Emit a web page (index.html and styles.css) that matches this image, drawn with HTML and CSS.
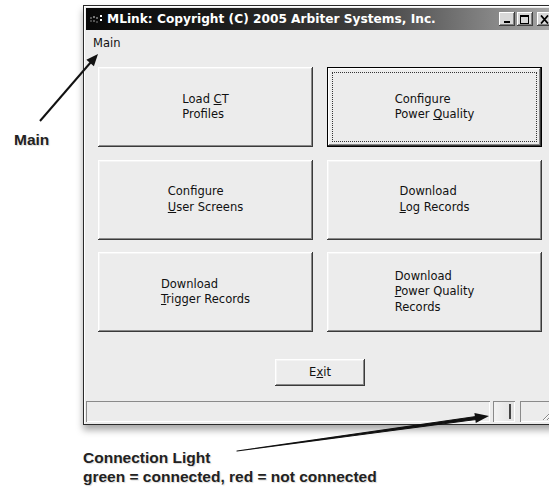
FILE: index.html
```html
<!DOCTYPE html>
<html>
<head>
<meta charset="utf-8">
<link rel="stylesheet" href="styles.css">
</head>
<body>
<div class="page">
  <div class="side"><span class="callout">Main</span></div>
  <div class="main">
    <div class="window">
      <div class="titlebar">
        <svg class="appicon" width="14" height="10" viewBox="0 0 14 10"><rect x="0" y="3" width="2" height="2" fill="#555"/><rect x="3" y="2" width="2" height="2" fill="#777"/><rect x="6" y="3" width="2" height="2" fill="#666"/><rect x="10" y="1" width="2" height="2" fill="#fff"/><rect x="10" y="5" width="2" height="2" fill="#fff"/><rect x="0" y="6" width="2" height="2" fill="#444"/><rect x="3" y="6" width="2" height="2" fill="#555"/><rect x="6" y="7" width="2" height="2" fill="#444"/></svg>
        <span class="title">MLink: Copyright (C) 2005 Arbiter Systems, Inc.</span>
        <div class="controls">
          <span class="ctl"><svg width="10" height="9" viewBox="0 0 10 9"><rect x="2" y="6" width="6" height="2" fill="#000"/></svg></span>
          <span class="ctl"><svg width="10" height="9" viewBox="0 0 10 9"><rect x="0.5" y="0.5" width="8" height="8" fill="none" stroke="#000"/><rect x="0" y="0" width="9" height="2" fill="#000"/></svg></span>
          <span class="ctl close"><svg width="10" height="9" viewBox="0 0 10 9"><path d="M1 0.5 L8 8.5 M8 0.5 L1 8.5" stroke="#000" stroke-width="1.8"/></svg></span>
        </div>
      </div>
      <div class="menubar"><span class="menuitem">Main</span></div>
      <div class="content">
        <div class="grid">
          <div class="btn"><span class="lbl">Load <u>C</u>T<br>Profiles</span></div>
          <div class="btn focused"><span class="focus"></span><span class="lbl">Configure<br>Power <u>Q</u>uality</span></div>
          <div class="btn"><span class="lbl">Configure<br><u>U</u>ser Screens</span></div>
          <div class="btn"><span class="lbl">Download<br><u>L</u>og Records</span></div>
          <div class="btn"><span class="lbl">Download<br><u>T</u>rigger Records</span></div>
          <div class="btn"><span class="lbl">Download<br><u>P</u>ower Quality<br>Records</span></div>
        </div>
        <div class="exitrow"><div class="btn exit"><span class="lbl">E<u>x</u>it</span></div></div>
      </div>
      <div class="statusbar">
        <div class="panel wide"></div>
        <div class="panel light"><span class="lamp"></span></div>
        <div class="panel grip"><svg width="12" height="12" viewBox="0 0 12 12"><path d="M11 3 L3 11 M11 7 L7 11" stroke="#888" stroke-width="1"/><path d="M11 4 L4 11 M11 8 L8 11" stroke="#fff" stroke-width="1"/></svg></div>
      </div>
    </div>
    <div class="caption">
      <div class="cap1">Connection Light</div>
      <div class="cap2">green = connected, red = not connected</div>
    </div>
  </div>
</div>
<svg class="arrows" width="549" height="487" viewBox="0 0 549 487">
  <line x1="40" y1="121" x2="91" y2="62" stroke="#111" stroke-width="2"/>
  <polygon points="98,54 93.9,66.3 86.4,59.8" fill="#111"/>
  <path d="M237 451 L476 416.5 L476 419.5 Z" fill="#111" stroke="#111" stroke-width="1.2" stroke-linejoin="round"/>
  <polygon points="489,416 475.8,422.9 474.4,412.9" fill="#111"/>
</svg>
</body>
</html>
```
FILE: styles.css
```css
html, body {
  margin: 0;
  padding: 0;
  background: #fff;
  overflow: hidden;
}
body {
  width: 549px;
  height: 487px;
  position: relative;
}
.page {
  display: flex;
  padding-top: 5px;
}
.side {
  width: 83px;
  flex: none;
  padding-top: 126px;
  box-sizing: border-box;
  padding-left: 14px;
}
.callout {
  font-family: "Liberation Sans", Arial, sans-serif;
  font-weight: bold;
  font-size: 15.5px;
  line-height: 16px;
  color: #222;
  text-shadow: 1px 1px 1px rgba(0,0,0,0.15);
}
.main {
  flex: none;
  display: flex;
  flex-direction: column;
}
.window {
  width: 475px;
  box-sizing: border-box;
  border: 1px solid #2a2a2a;
  padding: 2px;
  background: #ececec;
  box-shadow: 0 5px 7px rgba(0,0,0,0.35), inset 1px 1px #fff;
  font-family: "DejaVu Sans", Verdana, sans-serif;
  font-size: 11.5px;
  color: #111;
}
.titlebar {
  height: 22px;
  display: flex;
  align-items: center;
  background: linear-gradient(to right, #080808 0%, #1c1c1c 30%, #404040 60%, #7a7a7a 82%, #a8a8a8 100%);
  padding-left: 4px;
  box-sizing: border-box;
}
.appicon {
  flex: none;
  margin-right: 3px;
}
.title {
  color: #fff;
  font-weight: bold;
  font-size: 12.2px;
  white-space: nowrap;
  flex: 1;
}
.controls {
  display: flex;
  gap: 2px;
  padding-right: 2px;
}
.ctl {
  width: 16px;
  height: 14px;
  box-sizing: border-box;
  background: #d8d8d8;
  box-shadow: inset -1px -1px #404040, inset 1px 1px #fff, inset -2px -2px #808080;
  display: flex;
  align-items: center;
  justify-content: center;
}
.ctl.close {
  margin-left: 2px;
}
.menubar {
  height: 22px;
  display: flex;
  align-items: center;
  padding: 3px 0 0 7px;
  box-sizing: border-box;
}
.menuitem {
  font-size: 11.5px;
}
.content {
  padding: 15px 0 0 12px;
}
.grid {
  display: grid;
  grid-template-columns: 215px 215px;
  grid-template-rows: 80px 80px 80px;
  column-gap: 14px;
  row-gap: 12.5px;
}
.btn {
  position: relative;
  display: flex;
  align-items: center;
  justify-content: center;
  background: #ececec;
  box-shadow: inset -1px -1px #3a3a3a, inset 1px 1px #fff, inset -2px -2px #8a8a8a, inset 2px 2px #f4f4f4;
  box-sizing: border-box;
}
.btn.focused {
  border: 1px solid #000;
}
.focus {
  position: absolute;
  left: 4px;
  top: 4px;
  right: 4px;
  bottom: 4px;
  border: 1px dotted #333;
}
.lbl {
  display: inline-block;
  text-align: left;
  line-height: 15.5px;
  white-space: nowrap;
}
.exitrow {
  display: flex;
  justify-content: center;
  width: 444px;
  margin-top: 27px;
}
.btn.exit {
  width: 90px;
  height: 27px;
}
.statusbar {
  margin-top: 15px;
  height: 21px;
  display: flex;
  gap: 3px;
  align-items: stretch;
}
.panel {
  box-sizing: border-box;
  box-shadow: inset 1px 1px #8a8a8a, inset -1px -1px #fff;
}
.panel.wide {
  width: 404px;
}
.panel.light {
  width: 22px;
  display: flex;
  justify-content: flex-end;
  padding: 3px 4px 3px 0;
  background: linear-gradient(to right, #f4f4f4, #e0e0e0);
}
.lamp {
  width: 2px;
  background: #444;
}
.panel.grip {
  margin-left: 2px;
  flex: 1;
  display: flex;
  align-items: flex-end;
  padding: 0 0 1px 20px;
}
.caption {
  margin-top: 23px;
  font-family: "Liberation Sans", Arial, sans-serif;
  font-weight: bold;
  font-size: 15.5px;
  line-height: 19px;
  color: #222;
  text-shadow: 1px 1px 1px rgba(0,0,0,0.15);
}
.arrows {
  position: absolute;
  left: 0;
  top: 0;
  pointer-events: none;
}
```
